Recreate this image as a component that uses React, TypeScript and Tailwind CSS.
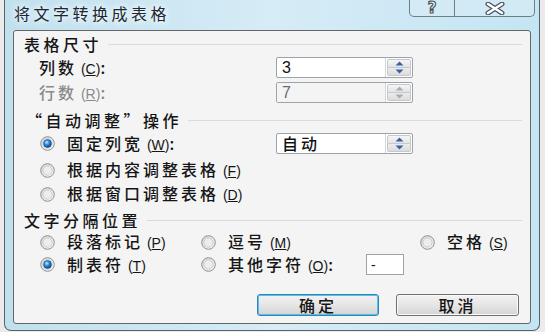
import React from "react";

const F = "font-['Noto_Sans_CJK_SC','Liberation_Sans',sans-serif]";

function Radio({ checked }: { checked?: boolean }) {
  return (
    <svg width="15" height="15" viewBox="0 0 15 15" className="shrink-0">
      <defs>
        <linearGradient id="rgo" x1="0" y1="0" x2="1" y2="1">
          <stop offset="0" stopColor="#d6d6d6" />
          <stop offset="1" stopColor="#fafafa" />
        </linearGradient>
        <radialGradient id="rgc" cx="0.4" cy="0.35" r="0.7">
          <stop offset="0" stopColor="#c4ecff" />
          <stop offset="0.45" stopColor="#2b8ee0" />
          <stop offset="1" stopColor="#0a3c86" />
        </radialGradient>
      </defs>
      <circle cx="7.5" cy="7.5" r="6.8" fill="url(#rgo)" stroke="#8c9094" strokeWidth="1" />
      <circle cx="7.5" cy="7.5" r="4.6" fill="#ededed" stroke="#c4c4c4" strokeWidth="0.8" />
      {checked && <circle cx="7.5" cy="7.5" r="3.9" fill="url(#rgc)" stroke="#1a4a8a" strokeWidth="0.6" />}
    </svg>
  );
}

function Spin({ disabled }: { disabled?: boolean }) {
  const c = disabled ? "#a9adb2" : "#3a5fa8";
  return (
    <div className="w-[27px] h-full flex flex-col p-[1px] border-l border-[#d3d6d9]">
      <div className="flex-1 flex items-center justify-center border border-[#c5c9cd] rounded-t-[2px] bg-gradient-to-b from-[#f6f6f6] to-[#e4e4e4]">
        <svg width="9" height="5" viewBox="0 0 9 5">
          <path d="M0.5 4.5 L4.5 0.5 L8.5 4.5 Z" fill={c} />
        </svg>
      </div>
      <div className="flex-1 flex items-center justify-center border border-t-0 border-[#c5c9cd] rounded-b-[2px] bg-gradient-to-b from-[#ececec] to-[#dcdcdc]">
        <svg width="9" height="5" viewBox="0 0 9 5">
          <path d="M0.5 0.5 L4.5 4.5 L8.5 0.5 Z" fill={c} />
        </svg>
      </div>
    </div>
  );
}

function Field({ value, disabled, cjk }: { value: string; disabled?: boolean; cjk?: boolean }) {
  return (
    <div className="w-[137px] h-[21px] flex border border-[#9ea3a8] rounded-[2px] bg-white shrink-0">
      <div
        className={`flex-1 flex items-center pl-[5px] leading-[19px] ${
          cjk ? `${F} text-[16px] tracking-[3px] font-medium` : "font-['Liberation_Sans',sans-serif] text-[16px]"
        } ${disabled ? "text-[#6b6b6b] bg-[#f4f4f4]" : "text-[#111]"}`}
      >
        {value}
      </div>
      <Spin disabled={disabled} />
    </div>
  );
}

function Header({ children }: { children: React.ReactNode }) {
  return (
    <div className="h-[20px] flex items-center">
      <span className="text-[16px] leading-[20px] font-medium text-[#151515] tracking-[3.5px] whitespace-nowrap">
        {children}
      </span>
      <div className="flex-1 h-px bg-[#d3dde5] ml-[6px] mr-[8px]" />
    </div>
  );
}

function Opt({ checked, children, w }: { checked?: boolean; children: React.ReactNode; w?: string }) {
  return (
    <div className={`flex items-center h-[20px] ${w ?? ""}`}>
      <Radio checked={checked} />
      <span className="ml-[12px] text-[16px] leading-[20px] font-medium text-[#151515] tracking-[3px] whitespace-nowrap">
        {children}
      </span>
    </div>
  );
}

function Key({ k }: { k: string }) {
  return (
    <span className="tracking-normal text-[14px] leading-[20px] font-['Liberation_Sans',sans-serif] font-normal">
      {" ("}
      <u>{k}</u>
      {")"}
    </span>
  );
}

export default function App() {
  return (
    <div className={`w-[545px] h-[332px] bg-[#ebebeb] overflow-hidden leading-[20px] ${F}`}>
      <div className="ml-[4px] w-[536px] h-[331px] rounded-b-[7px] border border-t-0 border-[#56626c] bg-gradient-to-r from-[#c0e0ee] via-[#d6ecf6] to-[#c4e5f3] flex flex-col">
        {/* title bar */}
        <div className="h-[30px] shrink-0 flex items-start">
          <div className="pl-[9px] pt-[3px] text-[16px] leading-[20px] text-[#1b2833] tracking-[3.5px] [text-shadow:0_0_6px_#ffffff,0_0_10px_#ffffff]">
            将文字转换成表格
          </div>
          <div className="ml-auto mr-[4px] flex h-[17px]">
            <div className="w-[46px] h-full border border-t-0 border-[#6e7d88] rounded-bl-[5px] bg-[#d8ecf5]/60 flex items-center justify-center">
              <span className="font-['DejaVu_Sans',sans-serif] font-bold text-[15px] leading-none text-white [-webkit-text-stroke:1.2px_#4b5560]">
                ?
              </span>
            </div>
            <div className="w-[80px] h-full border border-t-0 border-l-0 border-[#6e7d88] rounded-br-[5px] bg-[#d8ecf5]/60 flex items-center justify-center">
              <svg width="22" height="13" viewBox="0 0 22 13">
                <path d="M4 2 L18 11 M18 2 L4 11" stroke="#4b5560" strokeWidth="5" strokeLinecap="round" />
                <path d="M4 2 L18 11 M18 2 L4 11" stroke="#ffffff" strokeWidth="2.6" strokeLinecap="round" />
              </svg>
            </div>
          </div>
        </div>

        {/* panel */}
        <div className="mx-[8px] h-[294px] shrink-0 border-[1.5px] border-[#666] rounded-[3px] bg-[#f4f4f4] flex flex-col pt-[3px]">
          <div className="pl-[10px]">
            <Header>表格尺寸</Header>
          </div>

          <div className="mt-[3px] h-[21px] flex items-center">
            <div className="w-[262px] pl-[25px] text-[16px] leading-[20px] font-medium text-[#151515] tracking-[3px]">
              列数<Key k="C" />:
            </div>
            <Field value="3" />
          </div>
          <div className="mt-[4px] h-[21px] flex items-center">
            <div className="w-[262px] pl-[25px] text-[16px] leading-[20px] font-medium text-[#8a8a8a] tracking-[3px]">
              行数<Key k="R" />:
            </div>
            <Field value="7" disabled />
          </div>

          <div className="mt-[7px] pl-[12px]">
            <Header>“自动调整”操作</Header>
          </div>

          <div className="mt-[3px] h-[21px] flex items-center pl-[26px]">
            <div className="w-[236px]">
              <Opt checked>
                固定列宽<Key k="W" />:
              </Opt>
            </div>
            <Field value="自动" cjk />
          </div>
          <div className="mt-[6px] pl-[26px]">
            <Opt>
              根据内容调整表格<Key k="F" />
            </Opt>
          </div>
          <div className="mt-[4px] pl-[26px]">
            <Opt>
              根据窗口调整表格<Key k="D" />
            </Opt>
          </div>

          <div className="mt-[6px] pl-[10px]">
            <Header>文字分隔位置</Header>
          </div>

          <div className="mt-[2px] h-[20px] flex items-center pl-[26px]">
            <Opt w="w-[161px]">
              段落标记<Key k="P" />
            </Opt>
            <Opt w="w-[219px]">
              逗号<Key k="M" />
            </Opt>
            <Opt>
              空格<Key k="S" />
            </Opt>
          </div>
          <div className="mt-[2px] h-[21px] flex items-center pl-[26px]">
            <Opt checked w="w-[161px]">
              制表符<Key k="T" />
            </Opt>
            <div className="w-[165px]">
              <Opt>
                其他字符<Key k="O" />:
              </Opt>
            </div>
            <div className="w-[38px] h-[21px] border border-[#9ea3a8] bg-white flex items-center pl-[4px] text-[14px] font-['Liberation_Sans',sans-serif] text-[#111]">
              -
            </div>
          </div>

          <div className="mt-[19px] flex pl-[243px] gap-[17px]">
            <div className="w-[122px] h-[22px] rounded-[3px] border border-[#3c7fb1] shadow-[inset_0_0_0_1px_#48c4f0] bg-gradient-to-b from-[#f2f2f2] via-[#e6e6e6] to-[#d4d4d4] flex items-center justify-center text-[16px] leading-[20px] font-medium text-[#151515] tracking-[3px]">
              确定
            </div>
            <div className="w-[123px] h-[22px] rounded-[3px] border border-[#707070] shadow-[inset_0_0_0_1px_#fbfbfb] bg-gradient-to-b from-[#f2f2f2] via-[#e6e6e6] to-[#d4d4d4] flex items-center justify-center text-[16px] leading-[20px] font-medium text-[#151515] tracking-[3px]">
              取消
            </div>
          </div>
        </div>
      </div>
    </div>
  );
}
